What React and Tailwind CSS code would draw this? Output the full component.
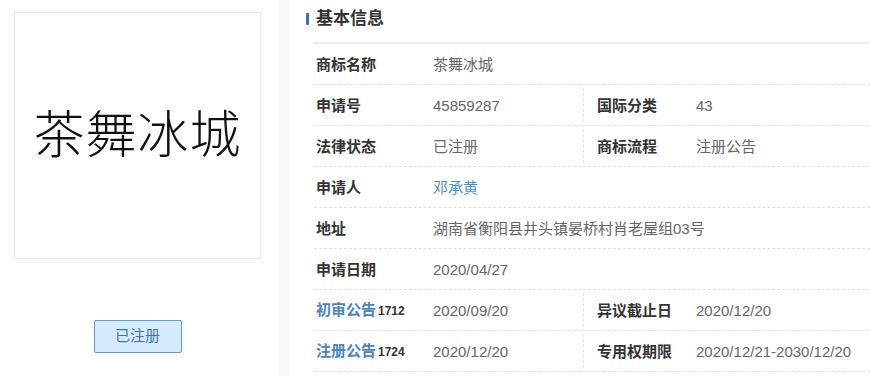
import React from 'react';

const font = "font-['Liberation_Sans','Noto_Sans_CJK_SC',sans-serif]";

const Label = ({ children }) => (
    <span className="text-[15px] font-bold text-[#333]">{children}</span>
);

const Value = ({ children, link }) => (
    <span className={`text-[15px] ${link ? 'text-[#4a8fd0]' : 'text-[#666]'}`}>{children}</span>
);

const Row = ({ children }) => (
    <div className="flex h-[41px] items-stretch border-b border-dashed border-[#e3e3e3]">{children}</div>
);

const Cell = ({ label, value, wide }) => (
    <div className={`flex items-center pl-[2px] pt-[1px] ${wide ? 'flex-1' : 'w-[269px]'}`}>
        <div className="w-[117px]">{label}</div>
        <div>{value}</div>
    </div>
);

const Cell2 = ({ label, value }) => (
    <div className="my-[3px] flex flex-1 items-center border-l border-dashed border-[#e3e3e3] pl-[13px] pt-[1px]">
        <div className="w-[99px]">{label}</div>
        <div>{value}</div>
    </div>
);

const Notice = ({ name, num }) => (
    <span className="flex items-baseline gap-[2px]">
        <span className="text-[15px] font-bold text-[#4b84c1]">{name}</span>
        <span className="text-[12px] font-bold text-[#333]">{num}</span>
    </span>
);

export default function App() {
    return (
        <div className={`flex h-[376px] w-[870px] overflow-hidden bg-white ${font}`}>
            {/* Left: trademark image + status */}
            <div className="flex w-[278px] flex-col items-start pl-[14px] pt-[12px]">
                <div className="flex h-[247px] w-[247px] items-center justify-center border border-[#e8e8e8] bg-white">
                    <span className="text-[51px] font-light leading-none tracking-[1px] text-[#111]">茶舞冰城</span>
                </div>
                <div className="mt-[61px] flex w-[247px] justify-center">
                    <div className="flex h-[33px] w-[88px] items-center justify-center rounded-[2px] border border-[#5e9bd6] bg-[#d6ebfc] text-[15px] text-[#3f72ad]">
                        已注册
                    </div>
                </div>
            </div>

            <div className="w-[12px] bg-[#f9f9f9]"></div>

            {/* Right: basic info */}
            <div className="flex flex-1 flex-col">
                <div className="flex h-[42px] items-center gap-[7px] pb-[4px] pl-[16px]">
                    <div className="h-[12px] w-[3px] rounded-[1px] bg-[#3b6fb3]"></div>
                    <span className="text-[17px] font-bold text-[#333]">基本信息</span>
                </div>
                <div className="ml-[24px] border-t-2 border-[#eeeeee]">
                    <Row>
                        <Cell wide label={<Label>商标名称</Label>} value={<Value>茶舞冰城</Value>} />
                    </Row>
                    <Row>
                        <Cell label={<Label>申请号</Label>} value={<Value>45859287</Value>} />
                        <Cell2 label={<Label>国际分类</Label>} value={<Value>43</Value>} />
                    </Row>
                    <Row>
                        <Cell label={<Label>法律状态</Label>} value={<Value>已注册</Value>} />
                        <Cell2 label={<Label>商标流程</Label>} value={<Value>注册公告</Value>} />
                    </Row>
                    <Row>
                        <Cell wide label={<Label>申请人</Label>} value={<Value link>邓承黄</Value>} />
                    </Row>
                    <Row>
                        <Cell wide label={<Label>地址</Label>} value={<Value>湖南省衡阳县井头镇晏桥村肖老屋组03号</Value>} />
                    </Row>
                    <Row>
                        <Cell wide label={<Label>申请日期</Label>} value={<Value>2020/04/27</Value>} />
                    </Row>
                    <Row>
                        <Cell label={<Notice name="初审公告" num="1712" />} value={<Value>2020/09/20</Value>} />
                        <Cell2 label={<Label>异议截止日</Label>} value={<Value>2020/12/20</Value>} />
                    </Row>
                    <Row>
                        <Cell label={<Notice name="注册公告" num="1724" />} value={<Value>2020/12/20</Value>} />
                        <Cell2 label={<Label>专用权期限</Label>} value={<Value>2020/12/21-2030/12/20</Value>} />
                    </Row>
                </div>
            </div>
        </div>
    );
}
